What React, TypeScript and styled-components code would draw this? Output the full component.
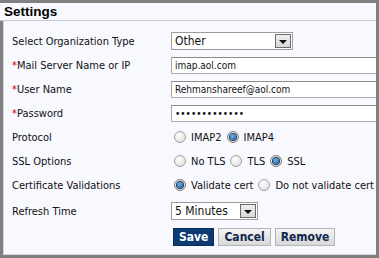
import React from "react";
import styled, { createGlobalStyle, css } from "styled-components";

const GlobalStyle = createGlobalStyle`
  html, body {
    margin: 0;
    padding: 0;
    background: #808080;
  }
  body {
    font-family: "DejaVu Sans Condensed", "Liberation Sans", sans-serif;
    font-size: 11px;
    color: #111;
  }
`;

const Frame = styled.div`
  width: 376px;
  height: 252px;
  margin-top: 3px;
  background: #f8f8ff;
  overflow: hidden;
  display: flex;
  flex-direction: column;
`;

const Header = styled.div`
  height: 17px;
  line-height: 18px;
  padding-left: 4px;
  font-family: "Liberation Sans", sans-serif;
  font-weight: bold;
  font-size: 13.5px;
  color: #000;
  border-bottom: 1px solid #c8c8cc;
`;

const Body = styled.div`
  flex: 1;
  border-left: 3px solid #808080;
  box-shadow: inset 1px 0 0 #d4d4d8, inset 0 -1px 0 #d4d4d8;
  padding: 8px 0 0 9px;
`;

const Form = styled.div`
  display: grid;
  grid-template-columns: 159px 1fr;
  grid-auto-rows: 24px;
  align-items: center;
`;

const Label = styled.div<{ $tall?: boolean }>`
  white-space: nowrap;
  color: #111;
  ${(p) =>
    p.$tall &&
    css`
      margin-top: 4px;
    `}
`;

const Star = styled.span`
  color: #cc0000;
`;

const Control = styled.div<{ $tall?: boolean }>`
  display: flex;
  align-items: center;
  white-space: nowrap;
  ${(p) =>
    p.$tall &&
    css`
      margin-top: 4px;
    `}
`;

const TextInput = styled.input`
  width: 230px;
  height: 17px;
  box-sizing: border-box;
  border: 1px solid #a8a8a8;
  border-top-color: #8c8c8c;
  background: #fff;
  padding: 0 3px;
  font-family: "DejaVu Sans Condensed", "Liberation Sans", sans-serif;
  font-size: 10px;
  color: #111;
  outline: none;
`;

const SelectBox = styled.div<{ $width: number }>`
  width: ${(p) => p.$width}px;
  height: 18px;
  box-sizing: border-box;
  border: 1px solid #9c9c9c;
  background: #fff;
  display: flex;
  align-items: center;
  justify-content: space-between;
  padding: 1px 1px 1px 3px;
  font-size: 12px;
  color: #111;
`;

const ArrowBox = styled.div`
  width: 16px;
  height: 14px;
  box-sizing: border-box;
  border: 1px solid #6c6c6c;
  background: linear-gradient(#f0f0f0, #d8d8d8);
  display: flex;
  align-items: center;
  justify-content: center;
  &::after {
    content: "";
    border-left: 4px solid transparent;
    border-right: 4px solid transparent;
    border-top: 4px solid #111;
    margin-top: 1px;
  }
`;

const RadioRow = styled.div`
  display: flex;
  align-items: center;
  gap: 5px;
  padding-left: 3px;
`;

const RadioOption = styled.label`
  display: flex;
  align-items: center;
  gap: 5px;
  color: #111;
  white-space: nowrap;
`;

const RadioDot = styled.span<{ $checked?: boolean }>`
  width: 12px;
  height: 12px;
  flex: none;
  box-sizing: border-box;
  border-radius: 50%;
  border: 1px solid #a4a4a4;
  background: radial-gradient(circle at 40% 35%, #ffffff, #d6d6d6);
  display: flex;
  align-items: center;
  justify-content: center;
  ${(p) =>
    p.$checked &&
    css`
      border-color: #7c7c7c;
      &::after {
        content: "";
        width: 6px;
        height: 6px;
        border-radius: 50%;
        background: radial-gradient(circle at 40% 35%, #6fb4ec, #0d4f99);
        box-shadow: 0 0 0 1px #1b3550;
      }
    `}
`;

const Buttons = styled.div`
  display: flex;
  gap: 3px;
  grid-column: 2;
  margin-top: 8px;
  padding-left: 2px;
`;

const Button = styled.button<{ $primary?: boolean }>`
  height: 18px;
  padding: 0 5px;
  font-family: "DejaVu Sans Condensed", "Liberation Sans", sans-serif;
  font-weight: bold;
  font-size: 12px;
  line-height: 16px;
  cursor: pointer;
  ${(p) =>
    p.$primary
      ? css`
          background: #0d3a73;
          border: 1px solid #0a2c58;
          color: #fff;
        `
      : css`
          background: linear-gradient(#f4f4f4, #d8d8d8);
          border: 1px solid #b4b4b4;
          color: #10284c;
          margin-left: 1px;
        `}
`;

const Radio: React.FC<{ label: string; checked?: boolean }> = ({
  label,
  checked,
}) => (
  <RadioOption>
    <RadioDot $checked={checked} />
    {label}
  </RadioOption>
);

export default function App() {
  return (
    <>
      <GlobalStyle />
      <Frame>
        <Header>Settings</Header>
        <Body>
          <Form>
            <Label>Select Organization Type</Label>
            <Control>
              <SelectBox $width={122}>
                Other
                <ArrowBox />
              </SelectBox>
            </Control>

            <Label>
              <Star>*</Star>Mail Server Name or IP
            </Label>
            <Control>
              <TextInput defaultValue="imap.aol.com" />
            </Control>

            <Label>
              <Star>*</Star>User Name
            </Label>
            <Control>
              <TextInput defaultValue="Rehmanshareef@aol.com" />
            </Control>

            <Label>
              <Star>*</Star>Password
            </Label>
            <Control>
              <TextInput type="password" defaultValue="rehman1234567" />
            </Control>

            <Label>Protocol</Label>
            <RadioRow>
              <Radio label="IMAP2" />
              <Radio label="IMAP4" checked />
            </RadioRow>

            <Label>SSL Options</Label>
            <RadioRow>
              <Radio label="No TLS" />
              <Radio label="TLS" />
              <Radio label="SSL" checked />
            </RadioRow>

            <Label>Certificate Validations</Label>
            <RadioRow>
              <Radio label="Validate cert" checked />
              <Radio label="Do not validate cert" />
            </RadioRow>

            <Label $tall>Refresh Time</Label>
            <Control $tall>
              <SelectBox $width={87}>
                5 Minutes
                <ArrowBox />
              </SelectBox>
            </Control>

            <Buttons>
              <Button $primary>Save</Button>
              <Button>Cancel</Button>
              <Button>Remove</Button>
            </Buttons>
          </Form>
        </Body>
      </Frame>
    </>
  );
}
